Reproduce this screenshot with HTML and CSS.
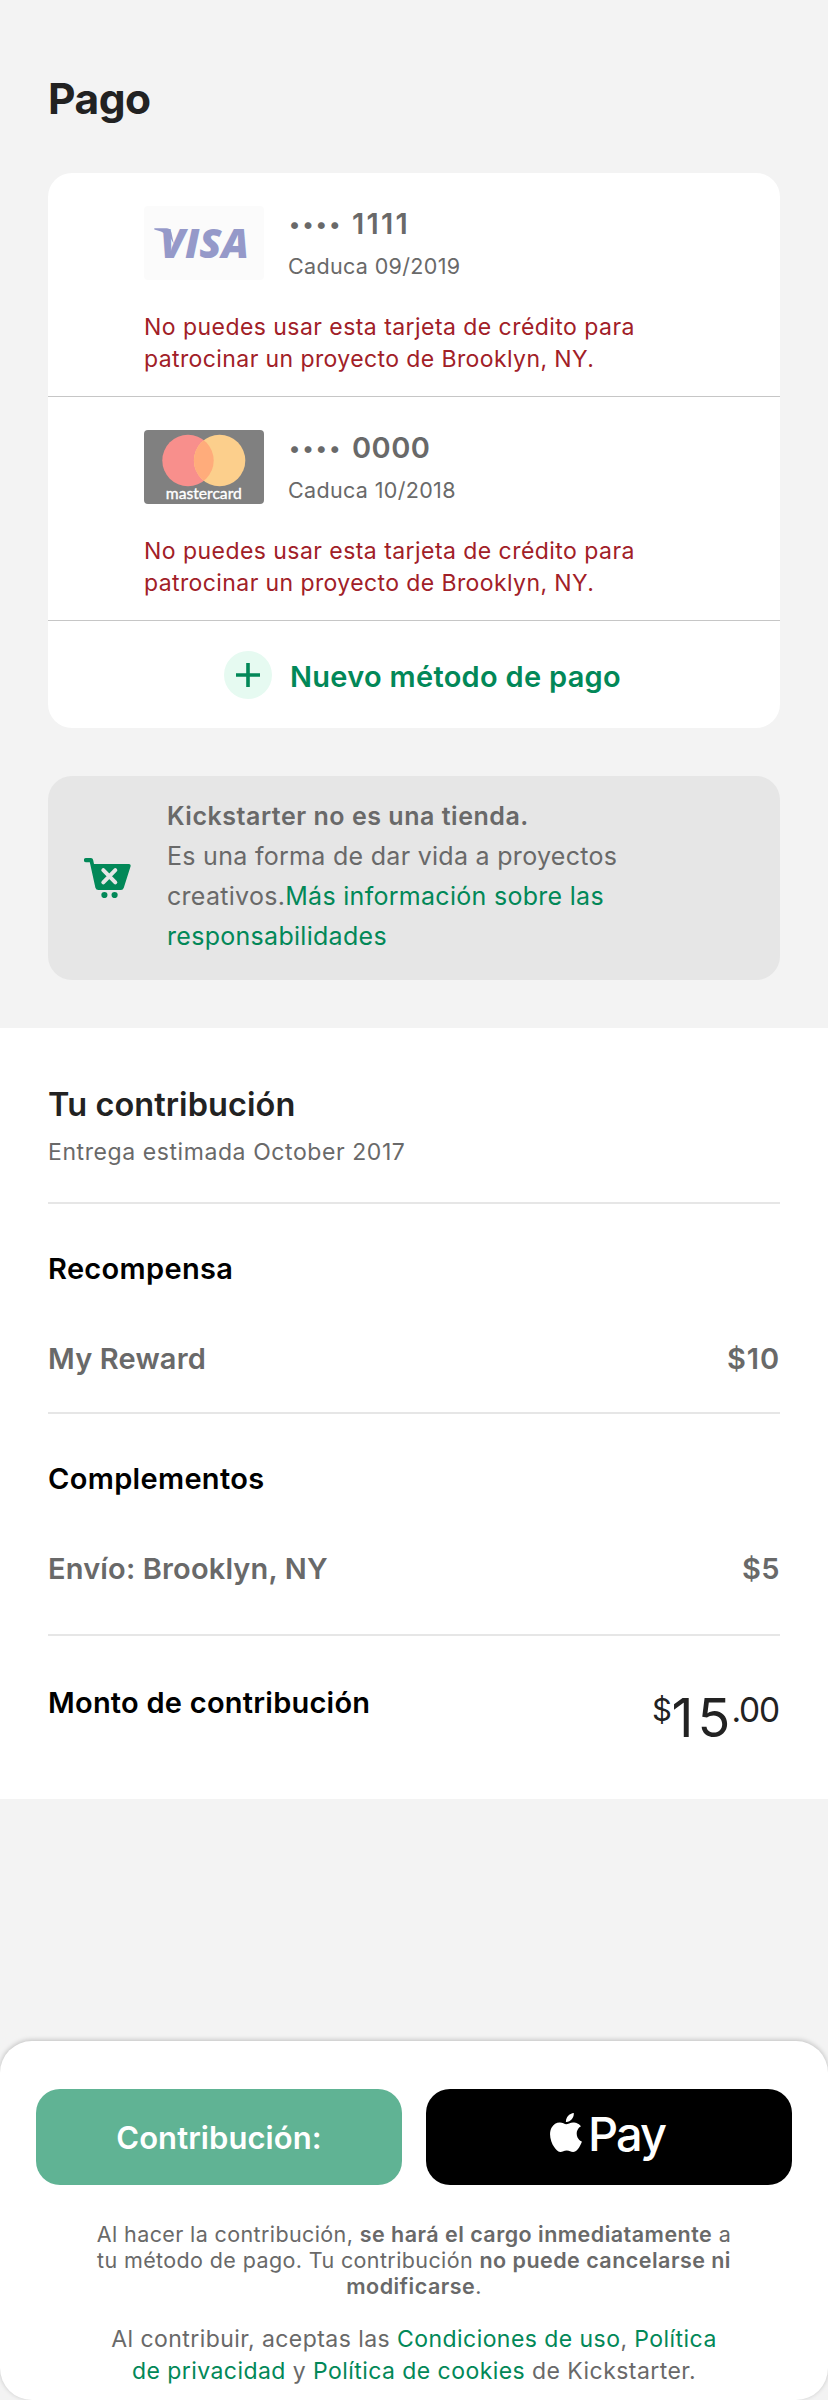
FILE: index.html
```
<!DOCTYPE html>
<html lang="es">
<head>
<meta charset="utf-8">
<title>Pago</title>
<link rel="stylesheet" href="styles.css">
</head>
<body>
<main class="page">
  <h1 class="title">Pago</h1>

  <section class="cards">
    <article class="card-row">
      <div class="card-head">
        <svg class="card-art" viewBox="0 0 120 74" role="img" aria-label="Visa">
          <rect width="120" height="74" rx="4" fill="#fbfbfb"/>
          <path d="M10.3 22.2H22.5Q26.4 22.4 27.4 26.4L29.8 38Q25 26.5 10.3 23.6Z" fill="#9599c9"/>
          <text class="visa-word" x="16" y="51.6" textLength="89" lengthAdjust="spacingAndGlyphs">VISA</text>
        </svg>
        <div class="card-info">
          <div class="card-number"><span class="dots">••••</span><span class="digits ones">1111</span></div>
          <div class="card-expiry">Caduca 09/2019</div>
        </div>
      </div>
      <p class="card-error">No puedes usar esta tarjeta de crédito para<br><span class="tight">patrocinar un proyecto de Brooklyn, NY.</span></p>
    </article>

    <article class="card-row">
      <div class="card-head">
        <svg class="card-art" viewBox="0 0 120 74" role="img" aria-label="Mastercard">
          <defs><clipPath id="left-disc"><circle cx="44" cy="30.5" r="25.7"/></clipPath></defs>
          <rect width="120" height="74" rx="4" fill="#808080"/>
          <circle cx="44" cy="30.5" r="25.7" fill="#f88f8c"/>
          <circle cx="75.6" cy="30.5" r="25.7" fill="#fccf8c"/>
          <circle cx="75.6" cy="30.5" r="25.7" fill="#ffac7b" clip-path="url(#left-disc)"/>
          <text class="mc-word" x="21.8" y="69" textLength="76" lengthAdjust="spacingAndGlyphs">mastercard</text>
        </svg>
        <div class="card-info">
          <div class="card-number"><span class="dots">••••</span><span class="digits">0000</span></div>
          <div class="card-expiry">Caduca 10/2018</div>
        </div>
      </div>
      <p class="card-error">No puedes usar esta tarjeta de crédito para<br><span class="tight">patrocinar un proyecto de Brooklyn, NY.</span></p>
    </article>

    <div class="add-row">
      <svg class="add-icon" viewBox="0 0 48 48" aria-hidden="true">
        <circle cx="24" cy="24" r="24" fill="#e6faf1"/>
        <path d="M24 12V36M12 24H36" stroke="#028858" stroke-width="3.6"/>
      </svg>
      <span class="add-label">Nuevo método de pago</span>
    </div>
  </section>

  <section class="notice">
    <svg class="cart" viewBox="0 0 48 40" aria-hidden="true">
      <path d="M2 0H7Q8.7 0 9.1 1.8L10 6H45Q47 6 46.6 8.2L39.8 29.8Q39 32 37 32H14.5Q12 32 11.4 29.8L5.8 4.2H2A2.1 2.1 0 0 1 2 0Z" fill="#028858"/>
      <path d="M19.3 12.2L31.3 24.4M31.3 12.2L19.3 24.4" stroke="#e6e6e6" stroke-width="4" stroke-linecap="round"/>
      <circle cx="20.4" cy="37" r="3.1" fill="#028858"/>
      <circle cx="30.6" cy="37" r="3.1" fill="#028858"/>
    </svg>
    <p class="notice-text"><b>Kickstarter no es una tienda.</b><br>Es una forma de dar vida a proyectos<br>creativos.<a>Más información sobre las<br>responsabilidades</a></p>
  </section>

  <section class="summary">
    <header class="block block-head">
      <h2 class="summary-title">Tu contribución</h2>
      <p class="delivery">Entrega estimada October 2017</p>
    </header>
    <div class="block block-reward">
      <h3 class="label">Recompensa</h3>
      <div class="line"><span class="my-reward">My Reward</span><span class="price ten">$10</span></div>
    </div>
    <div class="block block-addons">
      <h3 class="label">Complementos</h3>
      <div class="line"><span class="shipping">Envío: Brooklyn, NY</span><span class="price">$5</span></div>
    </div>
    <div class="total">
      <h3 class="label total-label">Monto de contribución</h3>
      <div class="amount"><span class="currency">$</span><span class="whole">15</span><span class="cents">.00</span></div>
    </div>
  </section>

  <footer class="sheet">
    <div class="buttons">
      <button class="btn pledge">Contribución:</button>
      <button class="btn apple-pay">
        <svg class="apple" viewBox="2.2 0 19.6 24" preserveAspectRatio="none" aria-hidden="true"><path fill="#fff" d="M12.152 6.896c-.948 0-2.415-1.078-3.96-1.04-2.04.027-3.91 1.183-4.961 3.014-2.117 3.675-.546 9.103 1.519 12.09 1.013 1.454 2.208 3.09 3.792 3.039 1.52-.065 2.09-.987 3.935-.987 1.831 0 2.35.987 3.96.948 1.637-.026 2.676-1.48 3.676-2.948 1.156-1.688 1.636-3.325 1.662-3.415-.039-.013-3.182-1.221-3.22-4.857-.026-3.04 2.48-4.494 2.597-4.559-1.429-2.09-3.623-2.324-4.39-2.376-2-.156-3.675 1.09-4.61 1.09zM15.53 3.83c.843-1.012 1.4-2.427 1.245-3.83-1.207.052-2.662.805-3.532 1.818-.78.896-1.454 2.338-1.273 3.714 1.338.104 2.715-.688 3.559-1.701z"/></svg>
        <span class="pay-word">Pay</span>
      </button>
    </div>
    <p class="fine">Al hacer la contribución, <b>se hará el cargo inmediatamente</b> a<br>tu método de pago. Tu contribución <b>no puede cancelarse ni<br>modificarse</b>.</p>
    <p class="terms">Al contribuir, aceptas las <a>Condiciones de uso</a>, <a>Política<br>de privacidad</a> y <a>Política de cookies</a> de Kickstarter.</p>
  </footer>
</main>
</body>
</html>
```
FILE: styles.css
```
* { box-sizing: border-box; margin: 0; padding: 0; }

body {
  width: 828px;
  background: #f3f3f3;
  color: #696969;
  font-family: Inter, "Liberation Sans", sans-serif;
}

.page { display: flex; flex-direction: column; height: 2400px; overflow: hidden; white-space: nowrap; }

.title {
  margin: 71px 48px 46px;
  font-size: 42.5px;
  line-height: 56px;
  font-weight: 700;
  letter-spacing: -0.5px;
  color: #222;
}

/* Payment methods */
.cards { margin: 0 48px; height: 555px; border-radius: 24px; background: #fff; }
.card-row { height: 224px; padding: 33px 96px 0; border-bottom: 1px solid #c6c6c6; }
.card-head { display: flex; gap: 24px; height: 74px; }
.card-art { width: 120px; height: 74px; flex: none; }
.visa-word { font: italic 800 40.5px "Open Sans", sans-serif; fill: #9599c9; }
.mc-word { font: 400 15px Lato, sans-serif; fill: #fff; stroke: #fff; stroke-width: 0.35px; }

.card-number { display: flex; font-size: 29px; line-height: 35px; font-weight: 600; }
.dots { width: 64px; font-size: 22px; line-height: 37px; height: 35px; letter-spacing: 2.3px; padding-left: 1px; }
.digits { letter-spacing: 0.47px; }
.ones { letter-spacing: 2.2px; }
.card-expiry { margin-top: 11px; font-size: 21.5px; line-height: 28px; letter-spacing: 0.34px; }
.card-error { margin-top: 31px; font-size: 23px; line-height: 32px; letter-spacing: 0.45px; color: #a12027; }
.tight { letter-spacing: 0.4px; }

.add-row { display: flex; gap: 18px; padding: 30px 0 0 176px; }
.add-icon { width: 48px; height: 48px; flex: none; }
.add-label { margin-top: 8px; font-size: 29px; line-height: 36px; font-weight: 600; letter-spacing: 0.29px; color: #028858; }

/* Notice */
.notice {
  display: flex;
  align-items: center;
  gap: 35px;
  height: 204px;
  margin: 48px 48px 48px;
  padding-left: 36px;
  border-radius: 24px;
  background: #e6e6e6;
}
.cart { width: 48px; height: 40px; flex: none; }
.notice-text { padding: 20px 0 24px; font-size: 25px; line-height: 40px; letter-spacing: 0.29px; }
.notice-text b { font-weight: 600; letter-spacing: 0.53px; }
a { color: #028858; }

/* Pledge summary */
.summary { height: 771px; padding: 0 48px; background: #fff; }
.block { border-bottom: 2px solid #e6e6e6; }
.block-head { height: 176px; padding-top: 56px; }
.block-reward { height: 210px; padding-top: 47px; }
.block-addons { height: 222px; padding-top: 47px; }
.summary-title { font-size: 32.5px; line-height: 42px; font-weight: 600; letter-spacing: 0.08px; color: #222; }
.delivery { margin-top: 11px; font-size: 23px; line-height: 30px; letter-spacing: 0.58px; }
.label { font-size: 29px; line-height: 36px; font-weight: 600; letter-spacing: 0.33px; color: #000; }
.total-label { letter-spacing: 0.24px; }
.line { display: flex; justify-content: space-between; margin-top: 54px; font-size: 29px; line-height: 36px; font-weight: 600; }
.my-reward, .shipping { letter-spacing: 0.16px; }
.price { letter-spacing: 0.4px; }
.ten { letter-spacing: 0.9px; }

.total { display: flex; justify-content: space-between; height: 163px; padding-top: 49px; }
.amount { display: flex; color: #222; font-size: 33.5px; line-height: 40px; }
.currency { width: 19.5px; margin-top: 5px; font-size: 31px; }
.whole { width: 60px; margin-top: 3px; font-size: 54px; line-height: 60px; letter-spacing: 4px; }
.cents { width: 48.5px; margin-top: 5px; letter-spacing: -1.2px; }

/* Bottom sheet */
.sheet {
  height: 359px;
  margin-top: 242px;
  padding: 48px 36px 0;
  border-radius: 32px;
  background: #fff;
  box-shadow: 0 -1px 5px rgba(0, 0, 0, 0.22);
  text-align: center;
}
.buttons { display: grid; grid-template-columns: 366px 366px; gap: 24px; }
.btn { height: 96px; border: 0; border-radius: 24px; color: #fff; font-family: inherit; white-space: nowrap; }
.pledge { background: #60b394; font-size: 31px; font-weight: 600; letter-spacing: 0.07px; }
.apple-pay { display: flex; align-items: flex-start; gap: 6px; padding: 0 0 0 124px; background: #000; }
.apple { width: 32px; height: 39px; margin-top: 24px; }
.pay-word { margin-top: 17px; font-size: 47px; line-height: 56px; font-weight: 500; letter-spacing: -1.95px; }

.fine { margin-top: 36px; font-size: 21.5px; line-height: 26px; letter-spacing: 0.38px; }
.fine b { font-weight: 600; letter-spacing: 0.47px; }
.terms { margin-top: 24px; font-size: 23px; line-height: 32px; letter-spacing: 0.44px; }
```
